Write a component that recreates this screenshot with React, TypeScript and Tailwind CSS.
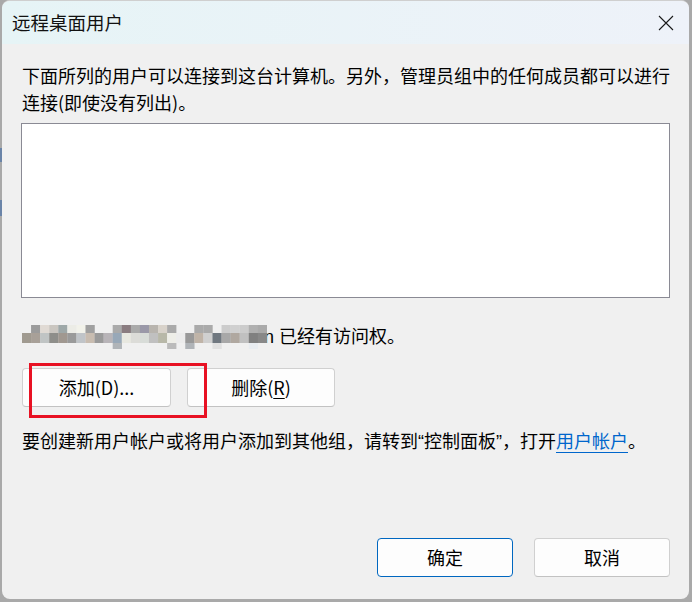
import React from "react";

const FONT = { fontFamily: '"Noto Sans CJK SC", "Noto Sans", sans-serif' };

const TOP: (string | null)[] = [
  null, "#9b9b9b", "#e0dad4", "#cac6c0", "#9ea8a8", "#ecece6", "#f2f2ea", "#a0a0a0", null, null,
  "#aaaaaa", "#8a7c80", "#aaaaaa", "#9a98a8", "#b8b4ae", "#d8d2ca", "#aaaaaa", null, null,
  "#aaaaaa", "#aaaaaa", null, "#cccccc", "#d0d0d0", "#cccccc", "#b0b0b0", "#aaaaaa",
];
const MID: (string | null)[] = [
  "#a09a90", "#a8a098", "#c0c4c4", "#8e8e8a", "#a09890", "#9a9a9a", "#c0c4c8", "#c8bcb0", "#9a9a9a",
  "#b8b4b8", "#98a8b8", "#e8e8e0", "#dcdcd8", "#d8dcd8", "#c0c0c0", "#b8b8a8", "#eeeee8", "#ececec",
  "#999999", "#c0b4a8", "#d0d0d0", "#707880", "#a8a8a8", "#b0a8a0", "#c0c0c0", "#808080", "#888888",
];
const BOT: Record<number, string> = { 10: "#b0b4b8", 16: "#bbbbbb", 18: "#b0b4b8", 21: "#e0e0e0", 25: "#e8ecf0" };

function Pixelated() {
  const w = 9.07;
  return (
    <svg width={245} height={24} viewBox="0 0 245 24" className="shrink-0 block relative z-10">
      {TOP.map((c, i) => (c ? <rect key={"t" + i} x={i * w} y={0} width={w + 0.2} height={8} fill={c} /> : null))}
      {MID.map((c, i) => (c ? <rect key={"m" + i} x={i * w} y={8} width={w + 0.2} height={10} fill={c} /> : null))}
      {Object.entries(BOT).map(([k, c]) => (
        <rect key={"b" + k} x={Number(k) * w} y={18} width={w + 0.2} height={6} fill={c} />
      ))}
    </svg>
  );
}

function Btn({ children, w, primary }: { children: React.ReactNode; w: string; primary?: boolean }) {
  return (
    <div
      className={
        "h-[39px] rounded-[4px] bg-[#fdfdfd] flex items-center justify-center text-[18px] text-black " +
        w +
        " " +
        (primary ? "border border-[#0067c0]" : "border border-[#d0d0d0] border-b-[#c2c2c2]")
      }
    >
      {children}
    </div>
  );
}

export default function App() {
  return (
    <div className="w-[692px] h-[602px] bg-[#a9a9a9] flex flex-col overflow-hidden" style={FONT}>
      <div className="flex flex-1">
        <div className="w-[2px] flex flex-col">
          <div className="h-[148px]" />
          <div className="h-[14px] bg-[#6a84a8]" />
          <div className="h-[38px]" />
          <div className="h-[16px] bg-[#6a84a8]" />
        </div>
        <div className="flex-1 flex flex-col rounded-[8px] bg-[#f0f0f0] overflow-hidden border-t border-[#cfcfcf]">
          {/* Title bar */}
          <div className="h-[43px] shrink-0 flex items-center justify-between pl-[10px] pr-[15px] bg-gradient-to-r from-[#e6f4f6] to-[#eef2f9]">
            <span className="text-[18.5px] leading-[27px] text-[#111]">远程桌面用户</span>
            <svg width="16" height="16" viewBox="0 0 16 16" className="block">
              <path d="M1 1L15 15M15 1L1 15" stroke="#1a1a1a" strokeWidth="1.1" fill="none" />
            </svg>
          </div>
          {/* Body */}
          <div className="flex-1 flex flex-col px-[19px] pb-[22px] text-black">
            <div className="mt-[18px] text-[18px] leading-[27px] whitespace-nowrap pl-[1px]">
              下面所列的用户可以连接到这台计算机。另外，管理员组中的任何成员都可以进行
              <br />
              连接(即使没有列出)。
            </div>
            <div className="mt-[7px] h-[175px] border border-[#8a8a94] bg-white" />
            <div className="mt-[25px] h-[27px] flex items-center pl-[1px]">
              <Pixelated />
              <span className="ml-[-3px] text-[18px] leading-[27px] whitespace-nowrap">
                <span style={{ fontFamily: '"Liberation Sans", sans-serif' }}>n </span>已经有访问权。
              </span>
            </div>
            <div className="relative mt-[18px] flex gap-[16px] pl-[1px]">
              <Btn w="w-[149px]">添加(D)...</Btn>
              <Btn w="w-[148px]">
                <span>
                  删除(<span className="underline underline-offset-[3px]">R</span>)
                </span>
              </Btn>
              <div className="absolute left-[8px] top-[-5px] w-[178px] h-[55px] border-[3px] border-[#e81123]" />
            </div>
            <div className="mt-[20px] text-[18px] leading-[27px] whitespace-nowrap pl-[1px]">
              要创建新用户帐户或将用户添加到其他组，请转到
              <span style={{ fontFamily: '"Liberation Sans", sans-serif' }}>“</span>
              控制面板
              <span style={{ fontFamily: '"Liberation Sans", sans-serif' }}>”</span>
              ，打开
              <span className="text-[#0066cc] underline underline-offset-[4px]">用户帐户</span>。
            </div>
            <div className="flex-1" />
            <div className="flex justify-end gap-[21px]">
              <Btn w="w-[136px]" primary>
                确定
              </Btn>
              <Btn w="w-[136px]">取消</Btn>
            </div>
          </div>
        </div>
        <div className="w-[3px]" />
      </div>
      <div className="h-[3px] shrink-0" />
    </div>
  );
}
